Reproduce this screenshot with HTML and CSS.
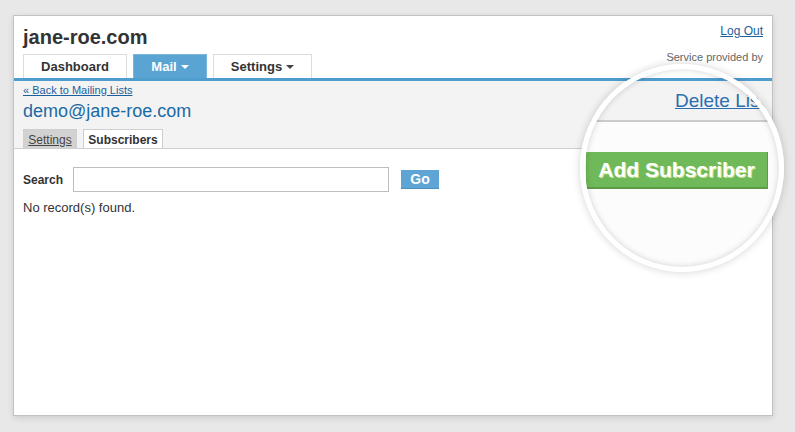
FILE: index.html
```html
<!DOCTYPE html>
<html>
<head>
<meta charset="utf-8">
<link rel="stylesheet" href="styles.css">
</head>
<body>
<div class="page">
  <div class="card">
    <header class="top">
      <div class="brand">
        <h1 class="title">jane-roe.com</h1>
        <nav class="tabs">
          <a class="tab tab-dash">Dashboard</a>
          <a class="tab tab-mail active">Mail <span class="caret"></span></a>
          <a class="tab tab-settings">Settings <span class="caret"></span></a>
        </nav>
      </div>
      <div class="account">
        <a class="logout">Log Out</a>
        <span class="provided">Service provided by</span>
      </div>
    </header>
    <section class="subhead">
      <a class="back">« Back to Mailing Lists</a>
      <h2 class="list-name">demo@jane-roe.com</h2>
      <div class="subtabs">
        <a class="subtab subtab-settings">Settings</a>
        <a class="subtab subtab-subs">Subscribers</a>
      </div>
    </section>
    <main class="content">
      <form class="search">
        <label class="search-label">Search</label>
        <input class="search-input" type="text">
        <button class="go" type="button">Go</button>
      </form>
      <p class="empty">No record(s) found.</p>
    </main>
  </div>
  <div class="lens">
    <div class="lens-white"></div>
    <div class="lens-blue"></div>
    <div class="lens-grey"><a class="delete">Delete List</a></div>
    <div class="lens-line"></div>
    <div class="lens-body"><span class="add-btn">Add Subscriber</span></div>
  </div>
</div>
</body>
</html>
```
FILE: styles.css
```css
html, body {
  margin: 0;
  padding: 0;
  background: #e8e8e8;
  font-family: "Liberation Sans", Arial, sans-serif;
}
.page {
  position: relative;
  width: 795px;
  height: 432px;
  padding: 15px 0 0 13px;
  box-sizing: border-box;
  overflow: hidden;
}
.card {
  width: 760px;
  height: 401px;
  box-sizing: border-box;
  background: #fff;
  border: 1px solid #c2c2c2;
  box-shadow: 0 2px 6px rgba(0,0,0,0.12);
  display: flex;
  flex-direction: column;
}
.top {
  display: flex;
  justify-content: space-between;
  padding: 10px 9px 0 9px;
  border-bottom: 3px solid #4f9dcd;
}
.title {
  margin: 0;
  font-size: 20px;
  line-height: 23px;
  font-weight: bold;
  color: #333;
}
.tabs {
  display: flex;
  gap: 6px;
  margin-top: 5px;
}
.tab {
  height: 24px;
  box-sizing: border-box;
  border: 1px solid #dcdcdc;
  border-bottom: none;
  font-size: 13px;
  font-weight: bold;
  color: #333;
  display: flex;
  align-items: center;
  justify-content: center;
  gap: 4px;
  padding-bottom: 1px;
}
.tab-dash { width: 104px; }
.tab-mail { width: 74px; background: #5aa4d3; border-color: #78b4dc; color: #fff; }
.tab-settings { width: 99px; }
.caret {
  width: 0;
  height: 0;
  border-left: 4px solid transparent;
  border-right: 4px solid transparent;
  border-top: 4px solid #444;
  margin-top: 1px;
}
.tab-mail .caret { border-top-color: #fff; }
.account {
  display: flex;
  flex-direction: column;
  align-items: flex-end;
}
.logout {
  font-size: 12px;
  line-height: 14px;
  color: #1b5f9c;
  text-decoration: underline;
  margin-top: -2px;
}
.provided {
  font-size: 11px;
  line-height: 12px;
  color: #666;
  margin-top: 13px;
}
.subhead {
  background: #f3f3f3;
  padding: 3px 9px 0 9px;
  border-bottom: 1px solid #cfcfcf;
}
.back {
  display: block;
  font-size: 11px;
  line-height: 12px;
  color: #1b5f9c;
  text-decoration: underline;
}
.list-name {
  margin: 5px 0 0 0;
  font-size: 18px;
  line-height: 21px;
  font-weight: normal;
  color: #1b6aa5;
}
.subtabs {
  display: flex;
  gap: 6px;
  margin-top: 7px;
}
.subtab {
  height: 19px;
  box-sizing: border-box;
  border: 1px solid #cfcfcf;
  border-bottom: none;
  font-size: 12px;
  display: flex;
  align-items: center;
  justify-content: center;
  padding-top: 1px;
}
.subtab-settings {
  width: 54px;
  background: #d2d2d2;
  color: #444;
  text-decoration: underline;
}
.subtab-subs {
  width: 80px;
  background: #fff;
  font-weight: bold;
  color: #333;
}
.content {
  padding: 18px 9px 0 9px;
}
.search {
  display: flex;
  align-items: center;
  margin: 0;
}
.search-label {
  font-size: 12px;
  font-weight: bold;
  color: #333;
  width: 50px;
}
.search-input {
  width: 316px;
  height: 25px;
  box-sizing: border-box;
  border: 1px solid #bdbdbd;
  margin: 0;
  padding: 0;
}
.go {
  margin-left: 12px;
  width: 38px;
  height: 19px;
  border: none;
  border-bottom: 1px solid #4a8cbc;
  background: #5ea5d5;
  color: #fff;
  font-family: "Liberation Sans", Arial, sans-serif;
  font-size: 14px;
  font-weight: bold;
  padding: 0;
}
.empty {
  margin: 8px 0 0 0;
  font-size: 13px;
  line-height: 15px;
  color: #333;
}
.lens {
  position: absolute;
  left: 580px;
  top: 64px;
  width: 204px;
  height: 208px;
  border-radius: 50%;
  overflow: hidden;
  background: #fcfcfc;
  box-shadow: 0 0 8px rgba(0,0,0,0.18);
  display: flex;
  flex-direction: column;
}
.lens::after {
  content: "";
  position: absolute;
  inset: 0;
  border-radius: 50%;
  border: 5px solid #fff;
  box-shadow: inset 0 0 6px rgba(0,0,0,0.18);
}
.lens-white { height: 14px; background: #fff; flex: none; }
.lens-blue { height: 3px; background: #4f9dcd; flex: none; }
.lens-grey {
  height: 39px;
  flex: none;
  background: #f3f3f3;
  padding: 9px 0 0 95px;
  box-sizing: border-box;
  white-space: nowrap;
}
.delete {
  font-size: 19px;
  line-height: 22px;
  color: #2a6fb0;
  text-decoration: underline;
}
.lens-line { height: 2px; background: #cacaca; flex: none; }
.lens-body {
  flex: 1;
  background: #fcfcfc;
  padding: 30px 0 0 6px;
}
.add-btn {
  display: flex;
  align-items: center;
  justify-content: center;
  width: 182px;
  height: 37px;
  box-sizing: border-box;
  background: #70b95a;
  border-bottom: 2px solid #5c9c47;
  border-right: 1px solid #5c9c47;
  color: #fff;
  font-size: 21px;
  font-weight: bold;
  text-shadow: 1px 1px 0 rgba(240,250,170,0.7);
  white-space: nowrap;
}
```
